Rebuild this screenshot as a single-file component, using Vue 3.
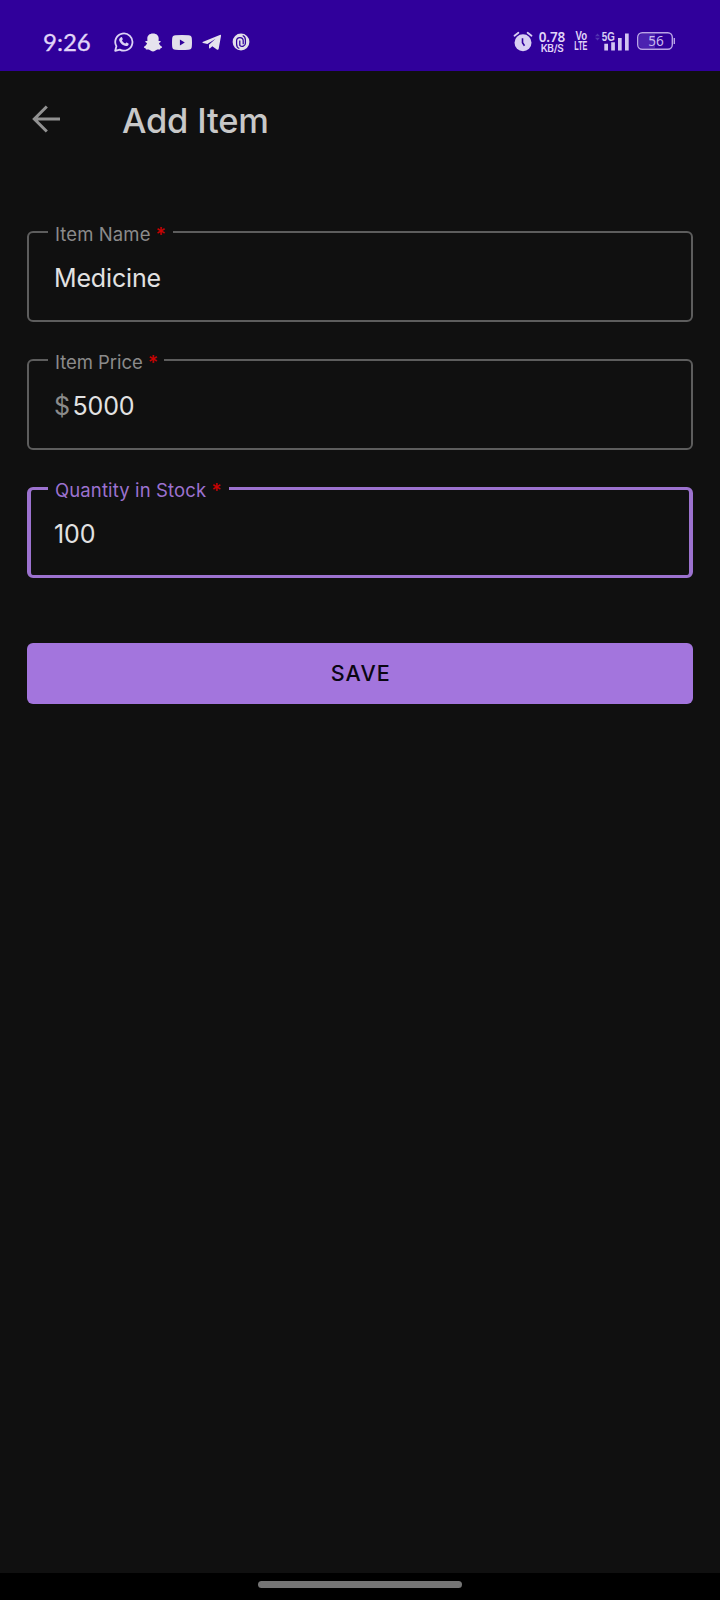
<script setup>
const fields = [
  { id: 'name', label: 'Item Name', value: 'Medicine' },
  { id: 'price', label: 'Item Price', prefix: '$', value: '5000' },
  { id: 'quantity', label: 'Quantity in Stock', value: '100', focused: true },
]
</script>

<template>
  <div class="screen">
    <header class="status">
      <span class="clock">9:26</span>
      <div class="apps">
        <svg class="whatsapp" width="20" height="20" viewBox="0 0 20 20">
          <path d="M1.2 18.8 2.4 14.3A8.6 8.6 0 1 1 5.8 17.6Z" fill="none" stroke="#dcd3f5" stroke-width="1.8" stroke-linejoin="round" />
          <path d="M6.900 5.300c.5-.4 1-.2 1.200.3l.7 1.500c.1.400-.5 1-.8 1.400.7 1.500 1.700 2.400 3.300 3.100.5-.4 1-1.200 1.400-1l1.700.9c.5.3.2 1.300-.2 1.700-1.200 1.200-3 1-4.700.1-2.100-1-3.500-2.600-4.200-4.500-.5-1.400.3-2.700 1.600-3.500Z" fill="#dcd3f5" />
        </svg>
        <svg class="snapchat" width="20" height="19" viewBox="0 0 20 19">
          <path d="M10 .4c3.700 0 5.700 2.300 5.700 5l-.1 2.500c.7.300 1.500-.3 2 .3.500.8-.7 1.300-1.700 1.800.6 2 1.500 3 3.100 3.700.4 1-.5 1.300-1.500 1.600-.3.500-.1 1.100-.7 1.200-1 .1-2-.3-3 .3-1.200.8-2.200 1.600-3.800 1.600s-2.600-.8-3.800-1.600c-1-.6-2-.2-3-.3-.6-.1-.4-.7-.7-1.200-1-.3-1.900-.6-1.500-1.600 1.600-.7 2.500-1.700 3.100-3.700-1-.5-2.200-1-1.700-1.800.5-.6 1.300 0 2-.3l-.1-2.500c0-2.700 2-5 5.700-5Z" fill="#e6e3ee" />
        </svg>
        <svg class="youtube" width="20" height="15" viewBox="0 0 20 15">
          <path fill-rule="evenodd" d="M3.500.2Q10-.2 16.500.2 19.600.4 19.800 3.300q.4 4.200 0 8.400-.2 2.900-3.300 3.100-6.500.4-13 0Q.4 14.600.2 11.700q-.4-4.200 0-8.400Q.4.400 3.500.2ZM7.900 4.600v5.800l4.900-2.900Z" fill="#e2dfea" />
        </svg>
        <svg class="telegram" width="20" height="17" viewBox="0 0 20 17">
          <path d="M.6 8.100 17.800.9q1.500-.5 1.200 1.100L16.700 14.800q-.4 1.700-1.900.7L10.300 12.200 8.100 14.300q-.9.800-1.100-.5V10.700L13.600 4.700 5.400 10.100 1 9q-1-.4-.4-.9Z" fill="#e6e3ee" />
        </svg>
        <svg class="swirl" width="18" height="18" viewBox="0 0 18 18">
          <circle cx="9" cy="9" r="8.400" fill="#e2dfea" />
          <path d="M7.300 15.500C5.300 14.800 4.600 13 4.600 11V7.800a3.300 3.300 0 0 1 6.600 0v3.500M10.700 2.500C12.700 3.200 13.400 5 13.400 7v3.200a3.200 3.200 0 0 1-5.600 2.100V7.500" fill="none" stroke="#30009c" stroke-width="1.250" />
        </svg>
      </div>
      <div class="system">
        <svg class="alarm" width="20" height="21" viewBox="0 0 20 21">
          <circle cx="10" cy="11.800" r="8.500" fill="#d8cef3" />
          <path d="M1.500 4.800 5.400 1.700M18.500 4.800 14.600 1.700" stroke="#d8cef3" stroke-width="1.800" stroke-linecap="round" />
          <path d="M9.500 7.300v4.400l2 3" fill="none" stroke="#30009c" stroke-width="1.600" />
        </svg>
        <div class="speed"><b>0.78</b><span>KB/S</span></div>
        <div class="volte"><span>Vo</span><span>LTE</span></div>
        <svg class="signal" width="36" height="22" viewBox="0 0 36 22">
          <path d="M1 5.300 3.500 2.500 6 5.300ZM1 6.800 3.500 9.600 6 6.800Z" fill="#5133b0" />
          <text x="7.800" y="9.800" textLength="13" lengthAdjust="spacingAndGlyphs">5G</text>
          <path d="M10.300 12.700H14V19.500H10.300ZM17.200 11.200h3.700v8.300H17.200ZM24 7h3.700v12.500H24ZM31 2.500h3.700v17H31Z" fill="#d2c5f1" />
        </svg>
        <svg class="battery" width="40" height="20" viewBox="0 0 40 20">
          <path d="M6 3h13v14H6a3 3 0 0 1-3-3V6a3 3 0 0 1 3-3Z" fill="#4b22b0" />
          <rect x="1.700" y="1.700" width="34.600" height="16.600" rx="4.500" fill="none" stroke="#b9a4e6" stroke-width="1.400" />
          <path d="M38.300 7v6" stroke="#b9a4e6" stroke-width="1.400" />
          <text x="12.300" y="14.900" textLength="15.500" lengthAdjust="spacingAndGlyphs">56</text>
        </svg>
      </div>
    </header>

    <div class="toolbar">
      <svg width="30" height="28" viewBox="0 0 30 28">
        <path d="M14.800 1.500 2.300 14l12.500 12.500M2.600 14H28" fill="none" stroke="#929292" stroke-width="3" />
      </svg>
      <h1>Add Item</h1>
    </div>

    <main>
      <div v-for="f in fields" :key="f.id" class="field" :class="[f.id, { focused: f.focused }]">
        <label>{{ f.label }}<i>*</i></label>
        <div class="value">
          <span v-if="f.prefix" class="prefix">{{ f.prefix }}</span><span class="text">{{ f.value }}</span>
        </div>
      </div>
      <button>SAVE</button>
    </main>

    <footer><div class="handle"></div></footer>
  </div>
</template>

<style>
html, body { background: #101010; }
</style>

<style scoped>
* { box-sizing: border-box; }
.screen { width: 720px; height: 1600px; display: flex; flex-direction: column; background: #101010; font-family: Inter, "Noto Sans", sans-serif; overflow: hidden; }
svg { display: block; flex: none; }
.status { height: 71px; flex: none; background: #30009b; display: flex; align-items: flex-start; color: #e0d5f8; }
.clock { font: 400 24px/28px Lato, sans-serif; -webkit-text-stroke: .3px #e0d5f8; margin: 28px 0 0 43px; width: 70.500px; white-space: nowrap; }
.apps { display: flex; height: 20px; margin-top: 32px; align-items: center; width: 137px; flex: none; }
.snapchat { margin-left: 9.500px; }
.youtube { margin-left: 9px; }
.telegram { margin-left: 10px; }
.swirl { margin-left: 10px; }
.system { display: flex; align-items: flex-start; margin: 31px 0 0 262.500px; }
.speed { margin: 0 0 0 5px; width: 28px; flex: none; display: flex; flex-direction: column; align-items: center; white-space: nowrap; }
.speed b { font: 600 13.500px/13px "Noto Sans", sans-serif; letter-spacing: -.1px; }
.speed span { font: 600 10px/9px Inter, sans-serif; letter-spacing: -.3px; }
.volte { margin: 1px 0 0 8px; width: 14px; flex: none; display: flex; flex-direction: column; align-items: center; font: 700 12px/9.500px "Liberation Sans", sans-serif; }
.volte span { transform: scaleX(.6); }
.volte span:first-child { transform: scaleX(.8); }
.signal { margin-left: 6px; }
.signal text { font: 700 12px "Liberation Sans", sans-serif; fill: #d8cef3; }
.battery { margin-left: 6px; }
.battery text { font: 400 13.500px "Noto Sans", sans-serif; fill: #c9b9ee; }
.toolbar { display: flex; align-items: flex-start; padding: 27.500px 0 0 32px; height: 160px; flex: none; }
.toolbar svg { margin-top: 6px; }
h1 { margin: 0 0 0 60px; font-size: 34.500px; line-height: 44px; font-weight: 500; color: #c8c8c8; letter-spacing: -.2px; }
main { padding: 0 27px; flex: 1; display: flex; flex-direction: column; }
.field { position: relative; height: 91px; flex: none; margin-bottom: 37px; border: 2px solid #5d5d5d; border-radius: 6px; padding: 30px 25px 0; }
.field.focused { border-color: #9c72cf; border-width: 3px 4px; padding: 29px 23px 0; }
label { position: absolute; left: 19px; top: -11px; height: 24px; width: 124.500px; padding: 0 7px; background: #101010; color: #8b8b8b; font-size: 18.500px; line-height: 24px; letter-spacing: .1px; white-space: nowrap; }
.price label { width: 116px; letter-spacing: -.05px; }
.focused label { left: 17px; top: -12px; width: 181px; letter-spacing: .12px; color: #9c72cf; }
label i { font-style: normal; font-size: 19px; line-height: 20px; color: #cb0202; -webkit-text-stroke: .2px #cb0202; margin-left: 5.500px; }
.value { font-size: 25px; line-height: 30px; letter-spacing: -.15px; color: #e2e2e2; display: flex; }
.prefix { color: #8b8b8b; width: 18.500px; }
button { height: 61.500px; margin-top: 27.500px; flex: none; border: 0; border-radius: 6px; background: #a375dd; color: #0a0612; font: 500 21.500px/61px Inter, sans-serif; letter-spacing: 1.100px; padding: 0 0 0 1.500px; }
footer { height: 27px; flex: none; background: #000; display: flex; justify-content: center; padding-top: 8px; }
.handle { width: 204px; height: 7px; border-radius: 4px; background: #757575; }
</style>
